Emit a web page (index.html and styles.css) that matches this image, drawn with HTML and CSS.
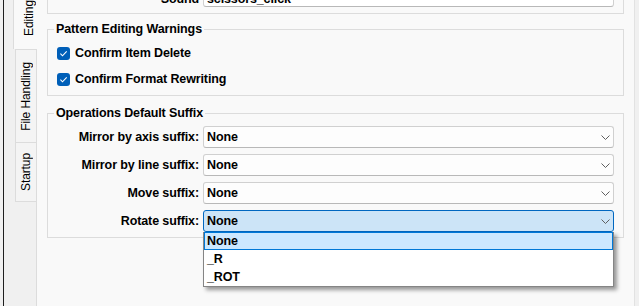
FILE: index.html
```html
<!DOCTYPE html>
<html lang="en">
<head>
    <meta charset="UTF-8">
    <title>Preferences</title>
    <link rel="stylesheet" href="styles.css">
</head>
<body>
    <div class="window">
        <div class="tabs">
            <div class="tab active"><span>Editing</span></div>
            <div class="tab"><span>File Handling</span></div>
            <div class="tab last"><span>Startup</span></div>
            <div class="tabs-rest"></div>
        </div>
        <div class="panel">
            <div class="group cut">
                <div class="row">
                    <label>Sound</label>
                    <div class="field">scissors_click</div>
                </div>
            </div>
            <div class="group warnings">
                <div class="group-title">Pattern Editing Warnings</div>
                <div class="check-row">
                    <span class="check"><svg width="13" height="13" viewBox="0 0 13 13"><polyline points="3.4,6.7 5.5,8.8 9.7,4.3" fill="none" stroke="#fff" stroke-width="1.1"/></svg></span>
                    Confirm Item Delete
                </div>
                <div class="check-row">
                    <span class="check"><svg width="13" height="13" viewBox="0 0 13 13"><polyline points="3.4,6.7 5.5,8.8 9.7,4.3" fill="none" stroke="#fff" stroke-width="1.1"/></svg></span>
                    Confirm Format Rewriting
                </div>
            </div>
            <div class="group suffixes">
                <div class="group-title">Operations Default Suffix</div>
                <div class="rows">
                    <div class="row">
                        <label>Mirror by axis suffix:</label>
                        <div class="combo"><span>None</span><svg class="chevron" width="9" height="5" viewBox="0 0 9 5"><polyline points="0.5,0.5 4.5,4.5 8.5,0.5" fill="none" stroke="#5f5f5f"/></svg></div>
                    </div>
                    <div class="row">
                        <label>Mirror by line suffix:</label>
                        <div class="combo"><span>None</span><svg class="chevron" width="9" height="5" viewBox="0 0 9 5"><polyline points="0.5,0.5 4.5,4.5 8.5,0.5" fill="none" stroke="#5f5f5f"/></svg></div>
                    </div>
                    <div class="row">
                        <label>Move suffix:</label>
                        <div class="combo"><span>None</span><svg class="chevron" width="9" height="5" viewBox="0 0 9 5"><polyline points="0.5,0.5 4.5,4.5 8.5,0.5" fill="none" stroke="#5f5f5f"/></svg></div>
                    </div>
                    <div class="row">
                        <label>Rotate suffix:</label>
                        <div class="combo open"><span>None</span><svg class="chevron" width="9" height="5" viewBox="0 0 9 5"><polyline points="0.5,0.5 4.5,4.5 8.5,0.5" fill="none" stroke="#5f5f5f"/></svg>
                            <div class="popup">
                                <div class="item current">None</div>
                                <div class="item">_R</div>
                                <div class="item">_ROT</div>
                            </div>
                        </div>
                    </div>
                </div>
            </div>
        </div>
    </div>
</body>
</html>
```

FILE: styles.css
```css
* {
    box-sizing: border-box;
}
body {
    margin: 0;
    height: 306px;
    overflow: hidden;
    background: #f0f0f0;
    font-family: "Liberation Sans", Arial, sans-serif;
    font-size: 12px;
    color: #000;
}
.window {
    display: flex;
    height: 306px;
    margin-left: 3px;
    border-left: 1px solid #1e1e1e;
}

/* vertical tab strip */
.tabs {
    width: 33px;
    display: flex;
    flex-direction: column;
}
.tab {
    margin-left: 11px;
    border: 1px solid #dcdcdc;
    border-bottom: none;
    background: #f4f4f4;
    display: flex;
    align-items: center;
    justify-content: center;
    height: 93px;
}
.tab span {
    writing-mode: vertical-rl;
    transform: rotate(180deg);
    line-height: 14px;
    letter-spacing: -0.1px;
}
.tab.active {
    margin-left: 9px;
    height: 49px;
    border: none;
    border-left: 1px solid #dcdcdc;
    background: #f9f9f9;
    justify-content: flex-end;
    flex-direction: column;
    padding-bottom: 13px;
    padding-left: 6px;
}
.tab.last {
    height: 60px;
    border-bottom: 1px solid #dcdcdc;
}
.tabs-rest {
    flex: 1;
    border-right: 1px solid #dcdcdc;
}

/* page */
.panel {
    flex: 1;
    margin-right: 4px;
    padding: 0 10px;
    background: #f9f9f9;
    border-right: 1px solid #e2e2e2;
    display: flex;
    flex-direction: column;
    font-size: 12.5px;
    font-weight: bold;
    letter-spacing: -0.12px;
}
.group {
    border: 1px solid #dcdcdc;
    padding: 0 9px;
}
.group.cut {
    border-top: none;
    margin-top: -15px;
    padding-bottom: 6px;
}
.cut label,
.cut .field {
    padding-top: 5px;
}
.group.warnings {
    margin-top: 15px;
    padding-bottom: 3px;
}
.group.suffixes {
    margin-top: 17px;
    padding-bottom: 5px;
}
.group-title {
    width: fit-content;
    margin: -8px 0 0 -3px;
    padding: 0 2px;
    line-height: 14px;
    background: #f9f9f9;
}

.check-row {
    height: 26px;
    display: flex;
    align-items: center;
}
.warnings .group-title + .check-row {
    margin-top: 4px;
}
.check {
    width: 13px;
    height: 13px;
    margin-right: 5px;
    border-radius: 3px;
    background: #005fb8;
    display: flex;
}

.rows {
    margin-top: 6px;
    display: flex;
    flex-direction: column;
    gap: 6px;
}
.row {
    height: 22px;
    display: flex;
    align-items: center;
}
.row label {
    width: 142px;
    margin-right: 4px;
    text-align: right;
}
.field,
.combo {
    flex: 1;
    height: 22px;
    padding: 0 3px;
    border: 1px solid #d0d0d0;
    border-bottom-color: #b8b8b8;
    border-radius: 3px;
    background: #fdfdfd;
    display: flex;
    align-items: center;
}
.field {
    background: #fff;
}
.combo {
    justify-content: space-between;
}
.combo.open {
    position: relative;
    background: #cce4f7;
    border-color: #0067c0;
}

/* dropdown list */
.popup {
    position: absolute;
    top: calc(100% + 1px);
    left: -1px;
    right: -1px;
    background: #fff;
    border: 1px solid #858585;
    border-top: none;
    box-shadow: 3px 3px 4px rgba(0, 0, 0, .4);
}
.item {
    height: 18px;
    padding-left: 2px;
    border: 1px solid transparent;
    display: flex;
    align-items: center;
}
.item.current {
    background: #cce8ff;
    border-color: #0078d7;
}
```
